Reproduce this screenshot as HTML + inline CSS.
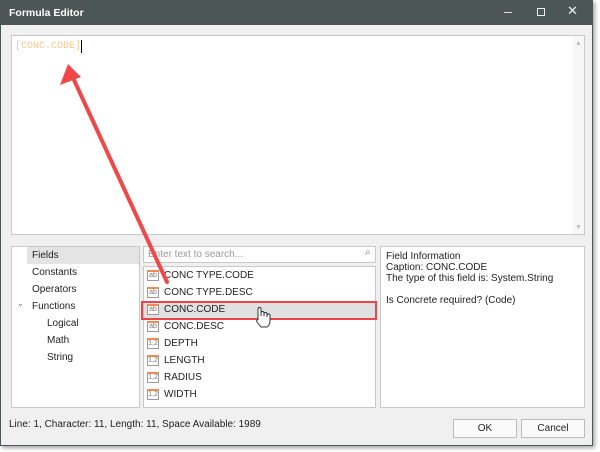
<!DOCTYPE html>
<html><head><style>
*{box-sizing:border-box;margin:0;padding:0}
body{width:600px;height:452px;background:#fff;position:relative;overflow:hidden;font-family:"Liberation Sans",sans-serif;font-size:10px;color:#222}
.abs{position:absolute}
.win{left:0;top:0;width:593px;height:446px;background:#f0f0f0;border:1px solid #4d5656;box-shadow:2px 2px 4px rgba(0,0,0,.35)}
.title{left:0;top:0;width:593px;height:25px;background:#4d5656;color:#fff;font-weight:bold;font-size:10.5px;padding:7px 0 0 9px}
.box{background:#fff;border:1px solid #c8c8c8}
.row{position:absolute;left:0;height:17px;width:231px;font-size:10px;line-height:17px;padding-left:20px}
.ic{position:absolute;left:3px;top:3px;width:12px;height:11px;border:1px solid #999;border-top:2px solid #f08c50;font-size:7px;line-height:8px;text-align:center;color:#777;background:#fff}
.tr{position:absolute;font-size:10px}
.btn{background:#fafafa;border:1px solid #bcbcbc;font-size:10px;text-align:center;line-height:17px}
</style></head><body>
<div class="abs win"></div>
<div class="abs title">Formula Editor</div>
<div class="abs" style="left:504px;top:12px;width:8px;height:1px;background:#ddd"></div>
<div class="abs" style="left:537px;top:8px;width:8px;height:8px;border:1px solid #eee"></div>
<div class="abs" style="left:567px;top:3px;color:#eee;font-size:13px">✕</div>
<div class="abs box" style="left:11px;top:35px;width:574px;height:200px"></div>
<div class="abs" style="left:573px;top:36px;width:11px;height:198px;background:#f7f7f7"></div>
<div class="abs" style="left:575px;top:40px;color:#bbb;font-size:7px">▲</div>
<div class="abs" style="left:575px;top:224px;color:#bbb;font-size:7px">▼</div>
<div class="abs" style="left:15px;top:41px;color:#f5c890;font-family:'Liberation Mono',monospace;font-size:10px">[CONC.CODE]</div>
<div class="abs" style="left:81px;top:40px;width:1px;height:13px;background:#000"></div>

<div class="abs box" style="left:11px;top:246px;width:129px;height:162px"></div>
<div class="abs" style="left:27px;top:247px;width:112px;height:17px;background:#e4e4e4"></div>
<div class="tr" style="left:32px;top:250px">Fields</div>
<div class="tr" style="left:32px;top:267px">Constants</div>
<div class="tr" style="left:32px;top:284px">Operators</div>
<div class="tr" style="left:17px;top:299px;font-size:8px;color:#666">⌄</div>
<div class="tr" style="left:32px;top:301px">Functions</div>
<div class="tr" style="left:47px;top:318px">Logical</div>
<div class="tr" style="left:47px;top:335px">Math</div>
<div class="tr" style="left:47px;top:352px">String</div>

<div class="abs box" style="left:143px;top:246px;width:233px;height:17px;color:#999;padding:2px 0 0 4px">Enter text to search...</div>
<div class="abs" style="left:365px;top:247px;color:#777;font-size:10px">⌕</div>
<div class="abs box" style="left:143px;top:266px;width:233px;height:142px"></div>
<div class="abs" style="left:144px;top:267px;width:231px;height:140px;background:#fff">
<div class="row" style="top:0"><span class="ic">ab</span>CONC TYPE.CODE</div>
<div class="row" style="top:17px"><span class="ic">ab</span>CONC TYPE.DESC</div>
<div class="row" style="top:34px;background:#e0e0e0"><span class="ic">ab</span>CONC.CODE</div>
<div class="row" style="top:51px"><span class="ic">ab</span>CONC.DESC</div>
<div class="row" style="top:68px"><span class="ic">1,2</span>DEPTH</div>
<div class="row" style="top:85px"><span class="ic">1,2</span>LENGTH</div>
<div class="row" style="top:102px"><span class="ic">1,2</span>RADIUS</div>
<div class="row" style="top:119px"><span class="ic">1,2</span>WIDTH</div>
</div>
<div class="abs" style="left:141px;top:301px;width:236px;height:19px;border:2px solid #e8444a"></div>

<div class="abs box" style="left:380px;top:246px;width:205px;height:162px;padding:4px 5px;line-height:11px">Field Information<br>Caption: CONC.CODE<br>The type of this field is: System.String<br><br>Is Concrete required? (Code)</div>

<div class="tr" style="left:9px;top:419px">Line: 1, Character: 11, Length: 11, Space Available: 1989</div>
<div class="abs btn" style="left:453px;top:419px;width:64px;height:19px">OK</div>
<div class="abs btn" style="left:521px;top:419px;width:64px;height:19px">Cancel</div>

<svg class="abs" style="left:0;top:0" width="600" height="452">
<line x1="167" y1="282" x2="74" y2="80" stroke="#f04848" stroke-width="4" stroke-linecap="round"/>
<polygon points="68,64 60,85 81,77" fill="#f04848"/>
<path d="M258 320 V309 a1.5 1.5 0 0 1 3 0 V316 V313 a1.5 1.5 0 0 1 3 0 V316 V314 a1.5 1.5 0 0 1 3 0 V317 V315.5 a1.5 1.5 0 0 1 3 0 V321 q0 4 -3 6 h-6 l-4 -5 q-1 -2 1 -2.5 z" fill="#fff" stroke="#333" stroke-width="1"/>
</svg>
</body></html>
